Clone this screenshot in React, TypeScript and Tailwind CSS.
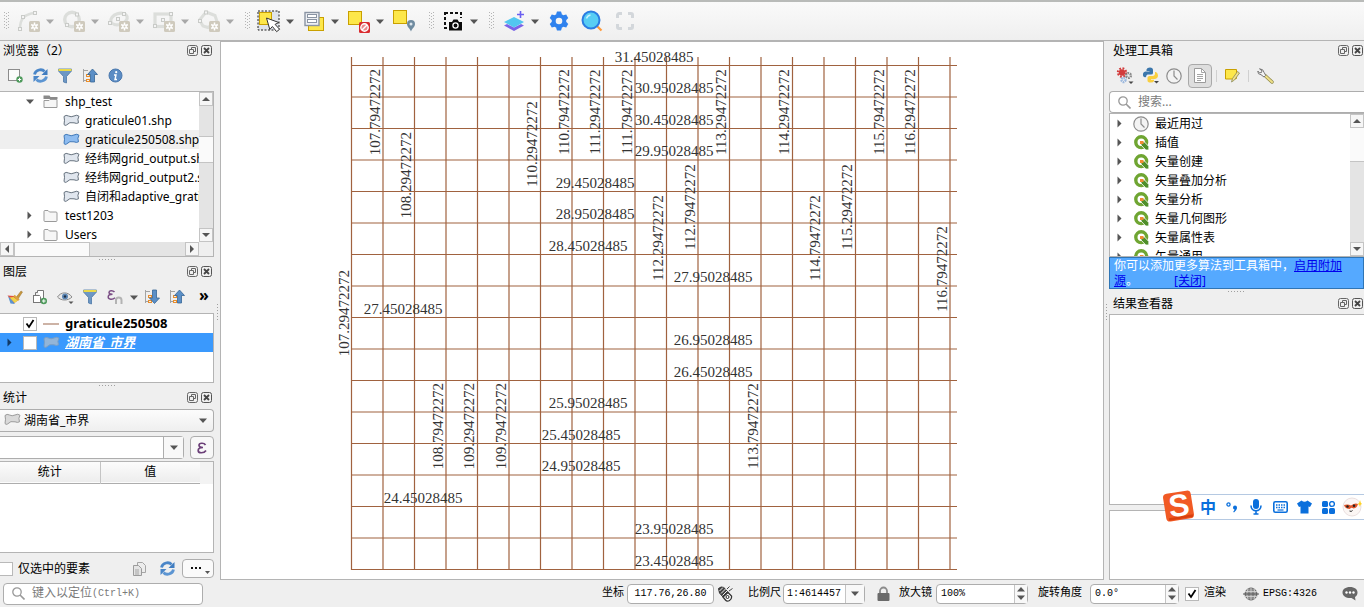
import React from "react";

type Kids = { children?: React.ReactNode };

/* ---------- small shared parts ---------- */

function Svg({ w, h, children }: Kids & { w: number; h: number }) {
  return (
    <svg width={w} height={h} viewBox={`0 0 ${w} ${h}`} fill="none" className="block shrink-0" aria-hidden="true">
      {children}
    </svg>
  );
}

function IconButton({ label, children, className = "" }: Kids & { label: string; className?: string }) {
  return (
    <button type="button" aria-label={label} className={`flex shrink-0 items-center justify-center ${className}`}>
      {children}
    </button>
  );
}

function Caret({ color = "#555" }: { color?: string }) {
  return (
    <Svg w={8} h={5}>
      <path d="M0 .5h8L4 5z" fill={color} />
    </Svg>
  );
}

function DropArrow({ label, color }: { label: string; color?: string }) {
  return (
    <IconButton label={label} className="h-6 w-4">
      <Caret color={color} />
    </IconButton>
  );
}

function ToolGrip() {
  return (
    <Svg w={5} h={18}>
      {[0, 2, 4].map((x) => (
        <path key={x} d={`M${x + 0.5} ${x === 2 ? 1 : 0}v18`} stroke="#b5b5b5" strokeDasharray="1 2" />
      ))}
    </Svg>
  );
}

function Splitter() {
  return (
    <div className="flex h-[5px] shrink-0 items-center justify-center">
      <Svg w={17} h={1}>
        <path d="M0 .5h17" stroke="#a0a0a0" strokeDasharray="1 2" />
      </Svg>
    </div>
  );
}

function SideGrip({ className }: { className: string }) {
  return (
    <div className={`absolute ${className}`}>
      <Svg w={1} h={17}>
        <path d="M.5 0v17" stroke="#a0a0a0" strokeDasharray="1 2" />
      </Svg>
    </div>
  );
}

function PanelTitle({ title, className = "" }: { title: string; className?: string }) {
  return (
    <div className={`flex h-[19px] shrink-0 items-center gap-[3px] ${className}`}>
      <h2 className="mr-auto whitespace-nowrap text-xs leading-4">{title}</h2>
      <IconButton label="浮动">
        <Svg w={11} h={11}>
          <rect x=".5" y=".5" width="10" height="10" rx="2" stroke="#666" />
          <path d="M4.500 4V2.500h4v4H7M2.500 4.500h4v4h-4z" stroke="#666" />
        </Svg>
      </IconButton>
      <IconButton label="关闭">
        <Svg w={11} h={11}>
          <rect x=".5" y=".5" width="10" height="10" rx="2" stroke="#555" />
          <path d="M3 3l5 5M8 3l-5 5" stroke="#444" strokeWidth="1.800" />
        </Svg>
      </IconButton>
    </div>
  );
}

function ScrollButton({ dir }: { dir: "up" | "down" | "left" | "right" }) {
  const d = { up: "M0 6l4-4 4 4z", down: "M0 2h8L4 6z", left: "M6 0v8L2 4z", right: "M2 0v8l4-4z" }[dir];
  return (
    <IconButton label={dir} className="size-[14px] border border-[#c4c4c4] bg-[#f6f6f6]">
      <Svg w={8} h={8}>
        <path d={d} fill="#555" />
      </Svg>
    </IconButton>
  );
}

function TreeArrow({ open = false, color = "#555" }: { open?: boolean; color?: string }) {
  return (
    <Svg w={9} h={9}>
      <path d={open ? "M1 2.500h8L5 7z" : "M2.500 .5v8l4-4z"} fill={color} />
    </Svg>
  );
}

function CheckBox({ id, checked, className = "" }: { id: string; checked?: boolean; className?: string }) {
  return (
    <span className={`relative block size-[14px] shrink-0 ${className}`}>
      <input
        id={id}
        type="checkbox"
        defaultChecked={checked}
        className="peer block size-[14px] appearance-none border border-[#b9b9b9] bg-white"
      />
      <span className="pointer-events-none absolute inset-0 hidden items-center justify-center peer-checked:flex">
        <Svg w={10} h={10}>
          <path d="M1.500 4.500L4 8l4.500-7" stroke="#000" strokeWidth="1.800" />
        </Svg>
      </span>
    </span>
  );
}

/* ---------- icons ---------- */

const EditBadge = () => (
  <g>
    <rect x="11" y="11" width="11" height="11" rx="1.500" fill="#cfcabd" />
    <path d="M16.500 12.500v8M13.200 14.500l6.600 4M19.800 14.500l-6.600 4" stroke="#fff" strokeWidth="1.500" />
    <circle cx="16.500" cy="16.500" r="2.200" fill="#fff" />
    <circle cx="16.500" cy="16.500" r="1" fill="#cfcabd" />
  </g>
);

const Node = ({ x, y }: { x: number; y: number }) => (
  <rect x={x - 1.5} y={y - 1.5} width="3" height="3" fill="#f4f4f4" stroke="#c9cbc8" />
);

const ArcIcon = () => (
  <Svg w={23} h={23}>
    <path d="M2 19C2 9 6 4 17 3" stroke="#dcdedb" strokeWidth="2.500" />
    <Node x={2} y={19} />
    <Node x={5} y={7} />
    <Node x={17} y={3} />
    <EditBadge />
  </Svg>
);
const CircleIcon = () => (
  <Svg w={23} h={23}>
    <circle cx="9" cy="9.500" r="7.300" stroke="#dcdedb" strokeWidth="3.400" />
    <Node x={14} y={4.500} />
    <Node x={4} y={15} />
    <EditBadge />
  </Svg>
);
const EllipseIcon = () => (
  <Svg w={23} h={23}>
    <ellipse cx="11" cy="9" rx="8.500" ry="5.500" transform="rotate(-18 11 9)" stroke="#dcdedb" strokeWidth="3.200" />
    <Node x={10} y={9} />
    <Node x={16} y={4} />
    <Node x={2} y={13} />
    <EditBadge />
  </Svg>
);
const RectIcon = () => (
  <Svg w={23} h={23}>
    <rect x="2" y="4" width="16" height="12.500" stroke="#dcdedb" strokeWidth="3.200" />
    <Node x={10} y={10} />
    <Node x={18} y={4} />
    <Node x={2} y={16} />
    <EditBadge />
  </Svg>
);
const PolyIcon = () => (
  <Svg w={23} h={23}>
    <path d="M8 2l9 3.500 2 6-9 6-5-1.500L1.500 10z" stroke="#dcdedb" strokeWidth="3" />
    <Node x={8} y={2.500} />
    <Node x={2} y={11} />
    <EditBadge />
  </Svg>
);

const yellow = { fill: "#fde74a", stroke: "#c9a000" };

const SelectIcon = () => (
  <Svg w={24} h={24}>
    <rect x="1" y="2" width="21" height="19" fill="#dfe3ea" stroke="#222" strokeDasharray="2 1.500" />
    <rect x="2.500" y="3.500" width="12" height="12" {...yellow} />
    <path d="M9.500 9l3.300 11.500 2.600-3 4.300 5.200 2.800-2.500-4.400-4.800 3.700-1.900z" fill="#fff" stroke="#333" />
  </Svg>
);
const SelectFormIcon = () => (
  <Svg w={21} h={20}>
    <rect x="4.500" y="6.500" width="15" height="13" {...yellow} />
    <rect x="1" y="1.500" width="14" height="13" fill="#eef0f4" stroke="#8a94a3" strokeWidth="1.400" />
    <rect x="3.500" y="3.500" width="9" height="3" fill="#fff" stroke="#8a94a3" />
    <rect x="3.500" y="8.500" width="9" height="3" fill="#fff" stroke="#8a94a3" />
  </Svg>
);
const DeselectIcon = () => (
  <Svg w={23} h={23}>
    <rect x=".5" y="1.500" width="13" height="13" {...yellow} />
    <rect x="11" y="12" width="11" height="11" rx="1.500" fill="#d92b2f" />
    <circle cx="16.500" cy="17.500" r="3.700" stroke="#fff" strokeWidth="1.400" fill="#e9898b" />
    <path d="M14 20l5-5" stroke="#fff" strokeWidth="1.400" />
  </Svg>
);
const SelectPinIcon = () => (
  <Svg w={23} h={22}>
    <rect x=".5" y=".5" width="13" height="13" {...yellow} />
    <path d="M18 21.500c-1-3-4-4.500-4-7.500a4 4 0 018 0c0 3-3 4.500-4 7.500z" fill="#6f8ba0" />
    <circle cx="18" cy="14" r="1.500" fill="#dfe7ee" />
  </Svg>
);
const CameraIcon = () => (
  <Svg w={20} h={20}>
    <rect x="2" y="2" width="16" height="15" stroke="#111" strokeWidth="2" strokeDasharray="3 2" />
    <path d="M5 7h15v13H5z" fill="#f6f6f6" />
    <path d="M6 11h3l1.500-2.500h4l1.500 2.500h3v8.500H6z" fill="#0a0a0a" />
    <circle cx="12.500" cy="14.500" r="2.600" stroke="#fff" strokeWidth="1.300" />
  </Svg>
);
const LayersIcon = () => (
  <Svg w={22} h={21}>
    <path d="M1 14.500l10 5.500 10-5.500-3-1.500-7 3.500L4 13z" fill="#7a63e8" />
    <path d="M1 11l10-5 10 5-10 5.500z" fill="#52c7f0" />
    <path d="M17.500 0v7M14 3.500h7" stroke="#6b5ff0" strokeWidth="1.600" />
  </Svg>
);
const GearIcon = () => (
  <Svg w={20} h={20}>
    <circle cx="10" cy="10" r="5.300" stroke="#2f82ee" strokeWidth="4" />
    {[0, 60, 120, 180, 240, 300].map((a) => (
      <path key={a} d="M7 3.500L8 .5h4l1 3z" fill="#2f82ee" transform={`rotate(${a} 10 10)`} />
    ))}
  </Svg>
);
const ZoomIcon = () => (
  <Svg w={22} h={22}>
    <path d="M16 16l4.500 4.500" stroke="#ff9a3c" strokeWidth="2.200" />
    <circle cx="10" cy="10" r="8.500" fill="#57cdf4" stroke="#2b7de2" strokeWidth="2" />
    <path d="M5.500 8.500Q6.500 5.500 9.500 5" stroke="#c9f2ff" strokeWidth="1.500" />
  </Svg>
);
const FullIcon = () => (
  <Svg w={18} h={18}>
    <path
      d="M1.500 6V3a1.500 1.500 0 011.500-1.500h3M12 1.500h3A1.500 1.500 0 0116.500 3v3M16.500 12v3a1.500 1.500 0 01-1.500 1.500h-3M6 16.500H3A1.500 1.500 0 011.500 15v-3"
      stroke="#d3d7db"
      strokeWidth="3"
    />
  </Svg>
);

const AddLayerIcon = () => (
  <Svg w={15} h={15}>
    <rect x=".5" y="1.500" width="11" height="11" fill="#fbfbfb" stroke="#8c8c8c" />
    <circle cx="11.500" cy="11.500" r="3.200" fill="#4e9a5c" />
    <path d="M11.500 9.800v3.400M9.800 11.500h3.400" stroke="#fff" />
  </Svg>
);
const RefreshIcon = () => (
  <Svg w={15} h={15}>
    <path d="M1.500 6.500C2.500 1.500 9 .5 11.500 3.500" stroke="#4a86c8" strokeWidth="2.800" />
    <path d="M14.500 1v6H8.500z" fill="#3f7cc0" />
    <path d="M13.500 8.500C12.500 13.500 6 14.500 3.500 11.500" stroke="#5c95d2" strokeWidth="2.800" />
    <path d="M.5 14V8h6z" fill="#4a86c8" />
  </Svg>
);
const FilterIcon = () => (
  <Svg w={14} h={16}>
    <path d="M.5 1h13v2L8.500 8.500V15l-3-1V8.500L.5 3z" fill="#6d97c4" stroke="#4d79a8" strokeWidth=".8" />
    <path d="M.5 1h13v2H.5z" fill="#ead94a" />
  </Svg>
);
function ArrowTreeIcon({ up }: { up: boolean }) {
  return (
    <Svg w={16} h={16}>
      <path d="M1.500 1v13M2 2.500h4M2 12.500h3" stroke="#a3a3a3" />
      <rect x="4.500" y="6.500" width="3" height="2" stroke="#e98e2c" />
      <rect x="4.500" y="11.500" width="3" height="2" stroke="#e98e2c" />
      <path
        d={up ? "M10.500 1l5 5.500h-3V14h-4V6.500h-3z" : "M10.500 14.500l5-5.500h-3V1h-4v8h-3z"}
        fill="#5b8fc7"
        stroke="#366696"
        strokeWidth=".8"
      />
    </Svg>
  );
}
const InfoIcon = () => (
  <Svg w={15} h={15}>
    <circle cx="7.500" cy="7.500" r="6.500" fill="#5b8cc4" stroke="#4877ad" />
    <circle cx="8.200" cy="4.200" r="1.100" fill="#fff" />
    <path d="M6 7h2L7 11.500h2" stroke="#fff" strokeWidth="1.400" />
  </Svg>
);
const BrushIcon = () => (
  <Svg w={16} h={15}>
    <path d="M9 7.500L14 1l1.500 1L11 9z" fill="#c9973a" stroke="#9a7430" strokeWidth=".5" />
    <path d="M.5 5.500l6.500.5 4.500 4-5 3.500z" fill="#e2503f" />
    <path d="M2.500 7.500l4-.5 4.500 3.500-3.500 2.500z" fill="#edd44a" />
    <path d="M1 6l5 5.500 2 2.500-4.500-.5z" fill="#5c93d0" />
    <path d="M7 5.500l5 4.500" stroke="#d9a441" strokeWidth="2" />
  </Svg>
);
const GroupIcon = () => (
  <Svg w={16} h={16}>
    <rect x="1.500" y="6.500" width="7" height="7" fill="#fff" stroke="#777" />
    <path d="M3.500 6V3.500h7v9h-2" stroke="#777" />
    <path d="M5.500 3V1.500h6v9h-1" fill="#fff" stroke="#777" />
    <circle cx="11.800" cy="12" r="3.200" fill="#4e9a5c" />
    <path d="M11.800 10.200v3.600M10 12h3.600" stroke="#fff" />
  </Svg>
);
const EyeIcon = () => (
  <Svg w={17} h={16}>
    <path d="M.5 8C4 2.500 11 2.500 15 8 11 12 4 12 .5 8z" fill="#e8e8e8" stroke="#8a8a8a" />
    <circle cx="8" cy="7.500" r="3" fill="#5c86b4" />
    <circle cx="8" cy="7.500" r="1.200" fill="#1d2f45" />
    <path d="M11.500 12.500h5L14 15z" fill="#555" />
  </Svg>
);
const EpsFilterIcon = () => (
  <Svg w={16} h={16}>
    <path d="M7.500 3C5.500.8 2 1.500 2 3.500 2 5 4 5.300 5.500 5.300 3.500 5.300 1.200 6 1.200 8 1.200 10.500 5.500 11 8 8.800" stroke="#7b4f86" strokeWidth="1.500" />
    <path d="M9 15v-4q0-2.500 2.700-2.500T14.500 11v4" stroke="#b3b3b3" strokeWidth="2" />
  </Svg>
);

function PolygonIcon({ fill = "#e0e6ee", stroke = "#66727e" }: { fill?: string; stroke?: string }) {
  return (
    <Svg w={17} h={13}>
      <path
        d="M1 2.500Q3 .5 5.500 2 8 3.500 11 2 14 .3 16 2.300 14 5 15.500 8.800 13.500 10 11 8.800 6.500 7.500 3.500 11 2 12 1 10.500 2 6 1 2.500z"
        fill={fill}
        stroke={stroke}
      />
    </Svg>
  );
}
function FolderIcon({ open = false }: { open?: boolean }) {
  return (
    <Svg w={15} h={14}>
      {open && <path d="M.5.500h6l1 1.500h7v2H.5z" fill="#8a8a8a" />}
      <path
        d={open ? "M1 5.500h5l1-1h7v8H1z" : "M1 2.500q0-1 1-1h3l1.500 1.500H13q1 0 1 1v7.500q0 1-1 1H2q-1 0-1-1z"}
        fill="#f6f6f6"
        stroke="#9a9a9a"
      />
    </Svg>
  );
}
const ClockIcon = () => (
  <Svg w={16} h={16}>
    <circle cx="8" cy="8" r="7.200" fill="#f3f3f3" stroke="#8d8d8d" strokeWidth="1.200" />
    <path d="M8 2.500V8l3.500 3.500" stroke="#8d8d8d" strokeWidth="1.200" />
  </Svg>
);
const QgisIcon = () => (
  <Svg w={15} h={15}>
    <circle cx="7.200" cy="7.200" r="5.400" fill="#fff" stroke="#6fa532" strokeWidth="3.400" />
    <path d="M7 7h3.500l4.300 4.500V15h-3L7 10z" fill="#4f8f2a" stroke="#fff" strokeWidth=".8" />
    <path d="M6 6h3.500v3L6 9z" fill="#f08b32" />
  </Svg>
);
const GearsIcon = () => (
  <Svg w={18} h={18}>
    <circle cx="6" cy="5.500" r="3.200" fill="#d23b3b" />
    <circle cx="6" cy="5.500" r="4.200" stroke="#d23b3b" strokeWidth="2" strokeDasharray="1.800 1.500" />
    <circle cx="12.500" cy="8.500" r="2.400" stroke="#888" strokeWidth="2.400" strokeDasharray="1.500 .8" />
    <circle cx="7.500" cy="13" r="2" stroke="#9db9de" strokeWidth="2.400" strokeDasharray="1.500 .6" />
    <path d="M12.500 14.500h5L15 17z" fill="#444" />
  </Svg>
);
const PythonIcon = () => (
  <Svg w={17} h={17}>
    <path d="M1 8.500Q.5 5 3.500 4.500h4V4h-3V2.500Q5 .5 8 .5t3 2.500v3Q11 7.500 9 7.500H5.500Q4 8 4 10 1.500 11 1 8.500z" fill="#3b76ab" />
    <path d="M14 5q2 1 2 3.500T13 12H9v.7h3V14q-.5 1.500-3.500 1.500T5.500 13.500v-3Q6 9 7.500 9H11q2.500-.5 2-4z" fill="#f9cf3f" />
    <path d="M12 14h5l-2.500 2.500z" fill="#444" />
  </Svg>
);
const DocIcon = () => (
  <Svg w={12} h={15}>
    <path d="M.5.500h7l4 4v10H.5z" fill="#fff" stroke="#9b9b9b" />
    <path d="M7.500.500v4h4M3 6.500h6M3 8.500h6M3 10.500h6M3 12.500h4" stroke="#a5a5a5" />
  </Svg>
);
const NoteIcon = () => (
  <Svg w={15} h={15}>
    <path d="M.5 1.500h11v9L9 11H.5z" {...yellow} />
    <path d="M6.500 14l1-3.500 5-7 2 1.500-5 7z" fill="#f4e28a" stroke="#8a8a5a" strokeWidth=".8" />
  </Svg>
);
const WrenchIcon = () => (
  <Svg w={17} h={16}>
    <path d="M8 7.500l7 6.500" stroke="#8f8a4a" strokeWidth="3.400" strokeLinecap="round" />
    <path d="M8 7.500l7 6.500" stroke="#efe08a" strokeWidth="2" strokeLinecap="round" />
    <path d="M2.500.8L5 2.800 4.500 4.500l-2 .3L.8 3Q.5 6.500 4 6.700l3 2.300 1.700-1.700L7 4.300Q6.500 1 2.500.8z" fill="#f4f4f4" stroke="#777" />
  </Svg>
);
const SearchIcon = () => (
  <Svg w={13} h={13}>
    <circle cx="5" cy="5" r="4.200" stroke="#999" strokeWidth="1.300" />
    <path d="M8 8l4.500 4.500" stroke="#999" strokeWidth="1.600" />
  </Svg>
);
const EpsIcon = () => (
  <Svg w={10} h={12}>
    <path d="M8.500 3C7 .5 2 .8 2 3.300 2 5 4 5.500 6 5.500 3.500 5.500 1.200 6.300 1.200 8.400 1.200 11.500 7 11.500 9 8.500" stroke="#6b3f78" strokeWidth="1.700" />
  </Svg>
);
const CopyIcon = () => (
  <Svg w={13} h={14}>
    <path d="M4.500.500h5l3 3v7h-8z" fill="#ececec" stroke="#a5a5a5" />
    <path d="M.5 3.500h5l3 3v7h-8z" fill="#e4e4e4" stroke="#9b9b9b" />
    <path d="M2 8h4M2 10h4M2 12h4" stroke="#a5a5a5" />
  </Svg>
);
const ExtentIcon = () => (
  <Svg w={17} h={17}>
    <path d="M1.500 3.500Q4 1 7 2.500l4 5-5 4.500-3.500-4z" fill="#444" stroke="#333" />
    <path d="M2.500 6L6 2.500M4 8.500l5-5M5.500 10.500l4.500-4.500" stroke="#f2f2f2" />
    <path d="M6 12l5-4.500 3.500 3.500q.5 3-2 4.500t-4-.5z" fill="#fff" stroke="#333" strokeWidth="1.300" />
    <circle cx="10.500" cy="12" r="1.500" fill="#fff" stroke="#222" />
    <path d="M10 4l2.500-2.500M12 6l3.500-2.500" stroke="#333" strokeWidth=".9" />
  </Svg>
);
const LockIcon = () => (
  <Svg w={13} h={16}>
    <path d="M3 8V5a3.500 3.500 0 017 0v3" stroke="#8b8b8b" strokeWidth="1.800" />
    <rect x=".5" y="7" width="12" height="8" rx="1" fill="#6a6a6a" />
  </Svg>
);
const GlobeIcon = () => (
  <Svg w={16} h={14}>
    <ellipse cx="8" cy="7" rx="6" ry="6" fill="#8a8a8a" stroke="#666" />
    <path d="M2 4.500h12M1 9.500h14M8 1v12M5 1.500Q2.500 7 5 12.500M11 1.500Q13.500 7 11 12.500" stroke="#d8d8d8" strokeWidth=".8" />
    <path d="M0 7h16" stroke="#555" />
  </Svg>
);
const BubbleIcon = () => (
  <Svg w={16} h={15}>
    <path d="M8 1c4.500 0 7.500 2.300 7.500 5.500 0 2.200-1 3.500-2.500 4.500l.5 3.500L9.500 12C4.500 12.500.5 10 .5 6.500.5 3.300 3.500 1 8 1z" fill="#666" />
    <circle cx="4.500" cy="6.500" r="1.200" fill="#fff" />
    <circle cx="8" cy="6.500" r="1.200" fill="#fff" />
    <circle cx="11.500" cy="6.500" r="1.200" fill="#fff" />
  </Svg>
);

/* ---------- toolbar ---------- */

function ToolGroup({ label, icon, color }: { label: string; icon: React.ReactNode; color?: string }) {
  return (
    <div className="mr-[3px] flex items-center">
      <IconButton label={label} className="h-7 w-[26px]">
        {icon}
      </IconButton>
      <DropArrow label={`${label}选项`} color={color} />
    </div>
  );
}

function TopToolbar() {
  return (
    <div className="flex h-[41px] shrink-0 items-center border-b border-t-2 border-b-[#b4b4b4] border-t-[#b9bbb9] bg-linear-to-b from-[#fafafa] to-[#efefef] pl-1">
      <div className="w-3">
        <ToolGrip />
      </div>
      <ToolGroup label="圆弧" icon={<ArcIcon />} color="#a8a8a8" />
      <ToolGroup label="圆" icon={<CircleIcon />} color="#a8a8a8" />
      <ToolGroup label="椭圆" icon={<EllipseIcon />} color="#a8a8a8" />
      <ToolGroup label="矩形" icon={<RectIcon />} color="#a8a8a8" />
      <ToolGroup label="正多边形" icon={<PolyIcon />} color="#a8a8a8" />
      <div className="w-[15px] pl-1">
        <ToolGrip />
      </div>
      <ToolGroup label="选择要素" icon={<SelectIcon />} />
      <ToolGroup label="按值选择" icon={<SelectFormIcon />} />
      <ToolGroup label="取消选择" icon={<DeselectIcon />} />
      <IconButton label="按位置选择" className="h-7 w-[26px]">
        <SelectPinIcon />
      </IconButton>
      <div className="w-[23px] pl-3">
        <ToolGrip />
      </div>
      <ToolGroup label="截图" icon={<CameraIcon />} />
      <div className="w-4 pl-1">
        <ToolGrip />
      </div>
      <ToolGroup label="图层" icon={<LayersIcon />} />
      <div className="flex items-center gap-[7px]">
        <IconButton label="设置" className="h-7 w-[26px]">
          <GearIcon />
        </IconButton>
        <IconButton label="缩放" className="h-7 w-[26px]">
          <ZoomIcon />
        </IconButton>
        <IconButton label="全图" className="h-7 w-[26px]">
          <FullIcon />
        </IconButton>
      </div>
    </div>
  );
}

/* ---------- left dock ---------- */

const files = [
  { name: "graticule01.shp" },
  { name: "graticule250508.shp", active: true },
  { name: "经纬网grid_output.shp" },
  { name: "经纬网grid_output2.shp" },
  { name: "自闭和adaptive_graticule.shp" },
];

function BrowserPanel() {
  return (
    <section>
      <PanelTitle title="浏览器（2）" className="pl-[3px] pr-[2px]" />
      <div className="flex h-[31px] items-center gap-[5px] pl-[5px]">
        <IconButton label="添加图层" className="size-5"><AddLayerIcon /></IconButton>
        <IconButton label="刷新" className="size-5"><RefreshIcon /></IconButton>
        <IconButton label="筛选" className="size-5"><FilterIcon /></IconButton>
        <IconButton label="全部折叠" className="size-5"><ArrowTreeIcon up /></IconButton>
        <IconButton label="属性" className="size-5"><InfoIcon /></IconButton>
      </div>
      <div className="border-y border-r border-[#b4b4b4] bg-white">
        <div className="flex h-[150px]">
          <ul className="min-w-0 flex-1 overflow-hidden text-xs leading-[19px]">
            <li className="flex h-[19px] items-center pl-[25px]">
              <TreeArrow open />
              <span className="ml-[9px]"><FolderIcon open /></span>
              <span className="ml-[7px]">shp_test</span>
            </li>
            {files.map((f) => (
              <li
                key={f.name}
                className={`flex h-[19px] items-center gap-[5px] whitespace-nowrap pl-[63px] ${f.active ? "bg-[#efefef]" : ""}`}
              >
                <PolygonIcon fill={f.active ? "#8ebcf0" : undefined} stroke={f.active ? "#3f78b8" : undefined} />
                <span>{f.name}</span>
              </li>
            ))}
            {["test1203", "Users"].map((n) => (
              <li key={n} className="flex h-[19px] items-center pl-[25px]">
                <TreeArrow />
                <span className="ml-[9px]"><FolderIcon /></span>
                <span className="ml-[7px]">{n}</span>
              </li>
            ))}
          </ul>
          <div className="flex w-[14px] flex-col bg-[#e4e4e4]">
            <ScrollButton dir="up" />
            <div className="mt-[30px] h-[27px] border-y border-[#c4c4c4] bg-[#fafafa]" />
            <div className="mt-auto"><ScrollButton dir="down" /></div>
          </div>
        </div>
        <div className="flex h-[14px] bg-[#e4e4e4]">
          <ScrollButton dir="left" />
          <div className="w-[76px] border-x border-t border-[#c4c4c4] bg-[#fafafa]" />
          <div className="ml-auto"><ScrollButton dir="right" /></div>
          <div className="w-[14px] bg-[#efefef]" />
        </div>
      </div>
    </section>
  );
}

function LayersPanel() {
  return (
    <section>
      <PanelTitle title="图层" className="pl-[3px] pr-[2px]" />
      <div className="flex h-8 items-center pl-[5px]">
        <div className="flex gap-[5px]">
          <IconButton label="样式" className="size-5"><BrushIcon /></IconButton>
          <IconButton label="添加组" className="size-5"><GroupIcon /></IconButton>
          <IconButton label="可见性" className="size-5"><EyeIcon /></IconButton>
          <IconButton label="筛选图例" className="size-5"><FilterIcon /></IconButton>
          <IconButton label="表达式筛选" className="size-5"><EpsFilterIcon /></IconButton>
        </div>
        <IconButton label="筛选选项" className="w-[17px]"><Caret /></IconButton>
        <div className="flex gap-[5px]">
          <IconButton label="全部展开" className="size-5"><ArrowTreeIcon up={false} /></IconButton>
          <IconButton label="全部折叠" className="size-5"><ArrowTreeIcon up /></IconButton>
        </div>
        <button type="button" className="ml-2 h-5 w-[18px] pb-1 text-base font-bold leading-4">»</button>
      </div>
      <ul className="h-[70px] border-y border-r border-[#b4b4b4] bg-white text-[13px]">
        <li className="flex h-[19px] items-center pl-[23px]">
          <CheckBox id="layer-a" checked />
          <span className="ml-[6px] h-[2px] w-4 bg-[#cdb3a6]" />
          <label htmlFor="layer-a" className="ml-[6px] font-bold leading-[19px]">graticule250508</label>
        </li>
        <li className="flex h-[19px] items-center bg-[#3a99fd] pl-[5px]">
          <TreeArrow color="#123a66" />
          <CheckBox id="layer-b" className="ml-[9px]" />
          <span className="ml-[6px]"><PolygonIcon fill="#93b5d8" stroke="#7c9fc4" /></span>
          <label htmlFor="layer-b" className="ml-[5px] font-bold italic leading-[19px] text-white underline">湖南省_市界</label>
        </li>
      </ul>
    </section>
  );
}

function StatsPanel() {
  return (
    <section className="flex flex-1 flex-col">
      <PanelTitle title="统计" className="mb-[2px] pl-[3px] pr-[2px]" />
      <div className="relative">
        <select aria-label="图层" className="block h-[23px] w-full appearance-none rounded-r-sm border border-l-0 border-[#adadad] bg-linear-to-b from-[#fcfcfc] to-[#efefef] pl-6 text-xs">
          <option>湖南省_市界</option>
        </select>
        <span className="pointer-events-none absolute left-1 top-1"><PolygonIcon fill="#d9d9d9" stroke="#9a9a9a" /></span>
        <span className="pointer-events-none absolute right-[7px] top-[9px]"><Caret /></span>
      </div>
      <div className="mt-1 flex h-[23px] gap-[6px]">
        <div className="flex min-w-0 flex-1 rounded-r-sm border border-l-0 border-[#adadad] bg-white">
          <input aria-label="表达式" className="min-w-0 flex-1" />
          <IconButton label="展开" className="w-5 border-l border-[#adadad] bg-[#f8f8f8]"><Caret /></IconButton>
        </div>
        <IconButton label="编辑表达式" className="w-6 rounded-sm border border-[#adadad] bg-[#f8f8f8]"><EpsIcon /></IconButton>
      </div>
      <div className="mt-[2px] min-h-[92px] flex-1 border-y border-r border-[#b4b4b4] bg-white">
        <div className="bg-[#f3f3f3]">
          <table className="w-[200px] table-fixed border-collapse text-xs">
            <thead>
              <tr className="h-[21px] border-b border-[#adadad] bg-linear-to-b from-[#fcfcfc] to-[#ededed]">
                <th className="border-r border-[#c4c4c4] p-0 font-normal">统计</th>
                <th className="p-0 font-normal">值</th>
              </tr>
            </thead>
          </table>
        </div>
      </div>
      <div className="flex h-[27px] items-center pt-1">
        <CheckBox id="only-selected" className="-ml-px" />
        <label htmlFor="only-selected" className="ml-[5px] text-xs">仅选中的要素</label>
        <IconButton label="复制" className="ml-auto size-5"><CopyIcon /></IconButton>
        <IconButton label="刷新" className="ml-2 size-5"><RefreshIcon /></IconButton>
        <button type="button" aria-label="更多" className="ml-[5px] flex h-[19px] w-8 items-center justify-center rounded-sm border border-[#adadad] bg-[#fafafa]">
          <Svg w={24} h={13}>
            <path d="M5 5h2v2H5zM9 5h2v2H9zM13 5h2v2h-2z" fill="#111" />
            <path d="M19 9h5l-2.500 3z" fill="#555" />
          </Svg>
        </button>
      </div>
    </section>
  );
}

/* ---------- map canvas ---------- */

const parallels: [string, number, number][] = [
  ["31.45028485", 654, 57], ["30.95028485", 674, 88], ["30.45028485", 674, 120], ["29.95028485", 674, 151],
  ["29.45028485", 595, 183], ["28.95028485", 595, 214], ["28.45028485", 588, 246], ["27.95028485", 713, 277],
  ["27.45028485", 403, 309], ["26.95028485", 713, 340], ["26.45028485", 713, 372], ["25.95028485", 588, 403],
  ["25.45028485", 581, 435], ["24.95028485", 581, 466], ["24.45028485", 423, 498], ["23.95028485", 674, 529],
  ["23.45028485", 674, 561],
];

const meridians: [string, number, number][] = [
  ["107.29472272", 344, 313], ["107.79472272", 375, 112], ["108.29472272", 406, 175], ["108.79472272", 438, 426],
  ["109.29472272", 469, 426], ["109.79472272", 501, 426], ["110.29472272", 532, 144], ["110.79472272", 564, 112],
  ["111.29472272", 595, 112], ["111.79472272", 627, 112], ["112.29472272", 658, 238], ["112.79472272", 690, 207],
  ["113.29472272", 721, 112], ["113.79472272", 753, 426], ["114.29472272", 784, 112], ["114.79472272", 815, 238],
  ["115.29472272", 847, 207], ["115.79472272", 879, 112], ["116.29472272", 910, 112], ["116.79472272", 942, 269],
];

function MapCanvas() {
  return (
    <main className="min-w-0 flex-1 border border-[#b4b4b4] bg-white">
      <svg viewBox="221 42 882 537" className="block h-full w-full font-['Liberation_Serif',serif] text-[15px]" role="img" aria-label="经纬网">
        <g stroke="#a0623f" strokeWidth="1.200">
          {Array.from({ length: 20 }, (_, i) => (
            <path key={i} d={`M${351.5 + i * 31.5} 57V570`} />
          ))}
          {Array.from({ length: 17 }, (_, i) => (
            <path key={i} d={`M351 ${65.5 + i * 31.5}H957`} />
          ))}
        </g>
        <g fill="#333" textAnchor="middle">
          {parallels.map(([t, x, y]) => (
            <text key={t} x={x} y={y + 5}>{t}</text>
          ))}
          {meridians.map(([t, x, y]) => (
            <text key={t} transform={`translate(${x + 5} ${y}) rotate(-90)`}>{t}</text>
          ))}
        </g>
      </svg>
    </main>
  );
}

/* ---------- right dock ---------- */

const algorithms = ["最近用过", "插值", "矢量创建", "矢量叠加分析", "矢量分析", "矢量几何图形", "矢量属性表", "矢量通用"];

function RightDock() {
  return (
    <aside className="relative flex w-[260px] shrink-0 flex-col pl-[5px]">
      <SideGrip className="left-[2px] top-[263px]" />
      <PanelTitle title="处理工具箱" className="pl-1 pr-px" />
      <div className="flex h-[31px] shrink-0 items-center pl-[6px]">
        <IconButton label="模型" className="w-5"><GearsIcon /></IconButton>
        <IconButton label="脚本" className="ml-[5px] w-5"><PythonIcon /></IconButton>
        <IconButton label="历史" className="ml-1 w-5"><ClockIcon /></IconButton>
        <IconButton label="结果" className="ml-[4px] h-6 w-6 rounded-sm border border-[#a9a9a9] bg-[#dedede]"><DocIcon /></IconButton>
        <span className="ml-1 h-3 w-px bg-[#d0d0d0]" />
        <IconButton label="就地编辑" className="ml-[5px] w-5"><NoteIcon /></IconButton>
        <span className="ml-[6px] h-3 w-px bg-[#d0d0d0]" />
        <IconButton label="选项" className="ml-[6px] w-5"><WrenchIcon /></IconButton>
      </div>
      <label className="flex h-[22px] shrink-0 items-center gap-[7px] rounded-l-sm border border-r-0 border-[#adadad] bg-white pl-2">
        <SearchIcon />
        <input
          aria-label="搜索"
          placeholder="搜索..."
          className="min-w-0 flex-1 text-xs outline-none placeholder:text-[#7a7a7a]"
        />
      </label>
      <div className="flex h-[144px] shrink-0 border-y border-l border-[#b4b4b4] bg-white">
        <ul className="min-w-0 flex-1 overflow-hidden text-xs">
          {algorithms.map((a, i) => (
            <li key={a} className="flex h-[19px] items-center pl-[5px]">
              <TreeArrow />
              <span className="ml-[9px] flex w-4 justify-center">{i === 0 ? <ClockIcon /> : <QgisIcon />}</span>
              <span className="ml-[6px]">{a}</span>
            </li>
          ))}
        </ul>
        <div className="flex w-[14px] flex-col bg-[#e4e4e4]">
          <ScrollButton dir="up" />
          <div className="h-[34px] border-b border-[#c4c4c4] bg-[#fafafa]" />
          <div className="mt-auto"><ScrollButton dir="down" /></div>
        </div>
      </div>
      <p className="h-8 shrink-0 border border-[#2f75b5] bg-[#55a9ff] px-1 text-xs leading-[15px] text-white">
        你可以添加更多算法到工具箱中，<a href="#enable" className="text-[#0000ee] underline">启用附加源</a>。
        <a href="#close" className="ml-9 text-[#0000ee] underline">[关闭]</a>
      </p>
      <Splitter />
      <PanelTitle title="结果查看器" className="mb-px pl-1 pr-px" />
      <div className="min-h-24 flex-[191] border-y border-l border-[#b4b4b4] bg-white" />
      <div className="h-[5px] shrink-0" />
      <div className="min-h-8 flex-[69] border-y border-l border-[#b4b4b4] bg-white" />
    </aside>
  );
}

/* ---------- status bar ---------- */

function SpinBox({ id, value, className }: { id: string; value: string; className: string }) {
  return (
    <div className={`flex h-5 rounded-sm border border-[#adadad] bg-white ${className}`}>
      <input id={id} defaultValue={value} className="min-w-0 flex-1 pl-1" />
      <div className="flex w-[13px] flex-col items-center justify-center gap-[3px] border-l border-[#c4c4c4] bg-[#f8f8f8]">
        <button type="button" aria-label="增加" className="rotate-180"><Caret /></button>
        <button type="button" aria-label="减少"><Caret /></button>
      </div>
    </div>
  );
}

function StatusBar() {
  return (
    <footer className="flex h-[27px] shrink-0 items-center pl-[3px] pr-[6px] font-['Liberation_Mono','Noto_Sans_CJK_SC',monospace] text-[10px]">
      <label className="flex h-[22px] w-[200px] items-center gap-[7px] rounded-sm border border-[#adadad] bg-white pl-2 text-[#7a7a7a]">
        <SearchIcon />
        <span className="flex items-center">
          <span className="text-xs">键入以定位</span>(Ctrl+K)
        </span>
        <input aria-label="定位" className="min-w-0 flex-1" />
      </label>
      <label htmlFor="coord" className="ml-auto text-[11px]">坐标</label>
      <input id="coord" defaultValue="117.76,26.80" className="ml-[3px] h-5 w-[87px] rounded-sm border border-[#adadad] bg-white text-center" />
      <IconButton label="范围" className="ml-[2px] w-5"><ExtentIcon /></IconButton>
      <label htmlFor="scale" className="ml-3 text-[11px]">比例尺</label>
      <div className="relative ml-[2px] w-[82px]">
        <select id="scale" className="block h-5 w-full appearance-none rounded-sm border border-[#adadad] bg-white pl-[3px]">
          <option>1:4614457</option>
        </select>
        <span className="pointer-events-none absolute inset-y-px right-px flex w-[19px] items-center justify-center border-l border-[#c4c4c4] bg-[#f8f8f8]">
          <Caret />
        </span>
      </div>
      <IconButton label="锁定比例" className="ml-[10px] w-[18px]"><LockIcon /></IconButton>
      <label htmlFor="mag" className="ml-[6px] text-[11px]">放大镜</label>
      <SpinBox id="mag" value="100%" className="ml-1 w-[92px]" />
      <label htmlFor="rot" className="ml-[10px] text-[11px]">旋转角度</label>
      <SpinBox id="rot" value="0.0°" className="ml-2 w-[89px]" />
      <CheckBox id="render" checked className="ml-[6px]" />
      <label htmlFor="render" className="ml-[5px] text-[11px]">渲染</label>
      <button type="button" className="ml-[17px] flex items-center gap-1">
        <GlobeIcon />
        EPSG:4326
      </button>
      <IconButton label="消息" className="ml-[25px]"><BubbleIcon /></IconButton>
    </footer>
  );
}

/* ---------- input method bar, floats above the window ---------- */

function ImeBar() {
  return (
    <div className="absolute bottom-[87px] right-0 flex h-[26px] w-[190px] items-center border-y border-[#b5c9e2] bg-white pl-6">
      <div className="absolute -left-[11px] -top-[5px]">
        <Svg w={32} h={32}>
          <rect x="1.500" y="2" width="28" height="28" rx="4" fill="#f15a24" transform="rotate(-9 16 16)" />
          <path d="M6 29.500l24-4" stroke="#d9400f" strokeWidth="2.500" />
          <text x="16" y="26" textAnchor="middle" fontSize="31" fontWeight="700" fill="#fff" transform="rotate(-7 16 16)" fontFamily="Liberation Sans, sans-serif">S</text>
        </Svg>
      </div>
      <div className="flex items-center gap-1 text-[#0a6fdc]">
        <button type="button" className="w-5 text-base font-bold leading-5">中</button>
        <IconButton label="标点" className="size-5">
          <Svg w={12} h={12}>
            <circle cx="2.500" cy="3.500" r="1.600" stroke="#0a6fdc" strokeWidth="1.300" />
            <path d="M7 6.500a2 2 0 114 0q0 3-3 5l-.8-.8Q8.500 9.500 8.500 8.500 7 8.300 7 6.500z" fill="#0a6fdc" />
          </Svg>
        </IconButton>
        <IconButton label="语音" className="size-5">
          <Svg w={12} h={16}>
            <rect x="3" y="0" width="6" height="10" rx="3" fill="#0a6fdc" />
            <path d="M1 6.500c0 7 10 7 10 0M6 12v3M3.500 15h5" stroke="#0a6fdc" strokeWidth="1.600" />
          </Svg>
        </IconButton>
        <IconButton label="键盘" className="size-5">
          <Svg w={15} h={12}>
            <rect x=".8" y=".8" width="13.400" height="10.400" rx="1.500" stroke="#0a6fdc" strokeWidth="1.600" />
            <path d="M3 4h9M3 6.500h9" stroke="#0a6fdc" strokeWidth="1.500" strokeDasharray="1.500 1" />
            <path d="M4.500 9h6" stroke="#0a6fdc" strokeWidth="1.200" />
          </Svg>
        </IconButton>
        <IconButton label="皮肤" className="size-5">
          <Svg w={15} h={14}>
            <path d="M4.500.500Q7.500 3 10.500.500L15 3.500 13 7l-1.500-.5V13.500h-8V6.500L2 7 0 3.500z" fill="#0a6fdc" />
          </Svg>
        </IconButton>
        <IconButton label="工具箱" className="size-5">
          <Svg w={13} h={13}>
            <rect width="6" height="6" rx="1.500" fill="#0a6fdc" />
            <circle cx="10" cy="3" r="2.400" stroke="#0a6fdc" strokeWidth="1.400" />
            <rect y="7" width="6" height="6" rx="1.500" fill="#0a6fdc" />
            <rect x="7" y="7" width="6" height="6" rx="1.500" fill="#0a6fdc" />
          </Svg>
        </IconButton>
        <IconButton label="助手" className="size-5">
          <Svg w={20} h={20}>
            <circle cx="10" cy="10" r="9" fill="#fbf6f4" stroke="#eadfdf" />
            <path d="M2 8q4-1 7 .5 4-3 7-1.500-1 4-4.500 4.500Q9 10 8 12 3 12 2 8z" fill="#e0562a" />
            <circle cx="5.500" cy="9.500" r="1.200" fill="#222" />
            <circle cx="12" cy="8.800" r="1.200" fill="#222" />
            <path d="M7.500 14q2 1 3-.5" stroke="#222" />
            <path d="M18 3l.8 2.700L20 7l-1.500.8L18 10l-.8-2.200L15.500 7l1.700-1z" fill="#ffd21f" />
          </Svg>
        </IconButton>
      </div>
    </div>
  );
}

export default function App() {
  return (
    <div className="relative flex min-h-screen flex-col overflow-hidden bg-[#efefef] font-['Noto_Sans','Noto_Sans_CJK_SC',sans-serif] text-black">
      <TopToolbar />
      <div className="flex flex-1">
        <aside className="relative flex w-[220px] shrink-0 flex-col pr-[6px]">
          <SideGrip className="right-[2px] top-[263px]" />
          <BrowserPanel />
          <Splitter />
          <LayersPanel />
          <Splitter />
          <StatsPanel />
        </aside>
        <MapCanvas />
        <RightDock />
      </div>
      <StatusBar />
      <ImeBar />
    </div>
  );
}
